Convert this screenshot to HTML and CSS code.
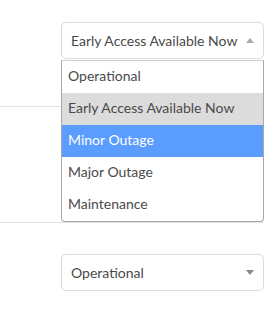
FILE: index.html
```html
<!DOCTYPE html>
<html lang="en">
<head>
    <meta charset="UTF-8">
    <meta name="viewport" content="width=device-width, initial-scale=1.0">
    <title>Component status</title>
    <link rel="stylesheet" href="styles.css">
</head>
<body>
    <div class="status-list">
        <div class="status-row">
            <div class="select-wrap">
                <div class="select open">
                    <span class="select-value">Early Access Available Now</span>
                    <span class="caret up"></span>
                </div>
                <ul class="options">
                    <li>Operational</li>
                    <li class="hover">Early Access Available Now</li>
                    <li class="active">Minor Outage</li>
                    <li>Major Outage</li>
                    <li>Maintenance</li>
                </ul>
            </div>
        </div>

        <!-- this one sits under the open list -->
        <div class="status-row">
            <div class="select-wrap">
                <div class="select">
                    <span class="caret"></span>
                </div>
            </div>
        </div>

        <div class="status-row">
            <div class="select-wrap">
                <div class="select">
                    <span class="select-value">Operational</span>
                    <span class="caret"></span>
                </div>
            </div>
        </div>
    </div>
</body>
</html>
```

FILE: styles.css
```css
body {
    margin: 0;
    font-family: Lato, "Open Sans", sans-serif;
    color: #4a4a4a;
    background: #fff;
    overflow: hidden;
}
.status-list {
    width: 264px;
    margin-top: -9px;
}
.status-row {
    height: 116px;
    padding-top: 31px;
    box-sizing: border-box;
    border-bottom: 1px solid #e2e2e2;
    display: flex;
    justify-content: flex-end;
}
.select-wrap {
    position: relative;
    width: 203px;
}
.select {
    height: 37px;
    box-sizing: border-box;
    border: 1px solid #dcdcdc;
    border-radius: 5px;
    display: flex;
    align-items: center;
    justify-content: space-between;
    padding: 0 9px 1px 9px;
    font-size: 14px;
    white-space: nowrap;
    background: #fff;
}
.caret {
    margin-left: auto;
    width: 0;
    height: 0;
    border-left: 4px solid transparent;
    border-right: 4px solid transparent;
    border-top: 5px solid #888;
}
.caret.up {
    border-top: none;
    border-bottom: 5px solid #aaa;
}
.options {
    position: absolute;
    top: 38px;
    left: 0;
    right: 0;
    z-index: 2;
    list-style: none;
    margin: 0;
    padding: 0;
    background: #fff;
    border: 1px solid #a8a8a8;
    border-top-color: #d0d0d0;
    border-radius: 0 0 4px 4px;
    font-size: 14px;
    white-space: nowrap;
}
.options li {
    height: 32px;
    line-height: 29px;
    padding-left: 6px;
}
.options li.hover {
    background: #dcdcdc;
}
.options li.active {
    background: #5b9cff;
    color: #fff;
}
```
